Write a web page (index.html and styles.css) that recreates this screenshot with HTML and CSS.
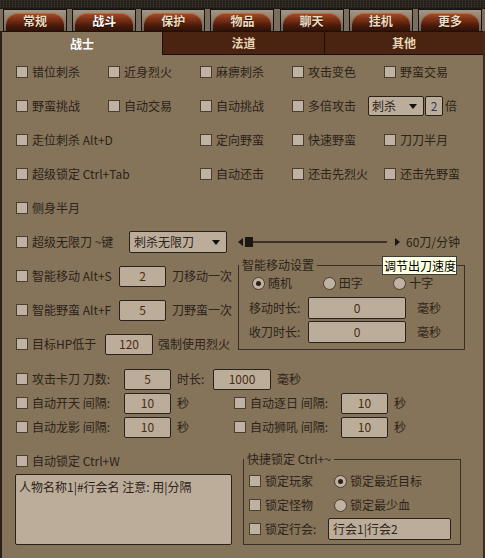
FILE: index.html
```html
<!DOCTYPE html>
<html lang="zh-CN">
<head>
<meta charset="utf-8">
<title>战斗设置</title>
<link rel="stylesheet" href="styles.css">
</head>
<body>
<div class="top-strip"></div>
<nav class="tabbar">
  <div class="tab"><div class="tab-in">常规</div></div>
  <div class="tab active"><div class="tab-in">战斗</div></div>
  <div class="tab"><div class="tab-in">保护</div></div>
  <div class="tab"><div class="tab-in">物品</div></div>
  <div class="tab"><div class="tab-in">聊天</div></div>
  <div class="tab"><div class="tab-in">挂机</div></div>
  <div class="tab"><div class="tab-in">更多</div></div>
</nav>
<main class="panel">
  <div class="subtabs">
    <div class="subtab st-1 active">战士</div>
    <div class="subtab st-2">法道</div>
    <div class="subtab st-3">其他</div>
  </div>
  <div class="content">
    <div class="grid5">
      <div class="item"><span class="cb"></span>错位刺杀</div>
      <div class="item"><span class="cb"></span>近身烈火</div>
      <div class="item"><span class="cb"></span>麻痹刺杀</div>
      <div class="item"><span class="cb"></span>攻击变色</div>
      <div class="item"><span class="cb"></span>野蛮交易</div>
    </div>
    <div class="grid5">
      <div class="item"><span class="cb"></span>野蛮挑战</div>
      <div class="item"><span class="cb"></span>自动交易</div>
      <div class="item"><span class="cb"></span>自动挑战</div>
      <div class="item span2"><span class="cb"></span><span class="w60">多倍攻击</span><span class="dd dd-sm"><span>刺杀</span><i class="tri"></i></span><span class="numbox">2</span><span class="ml2">倍</span></div>
    </div>
    <div class="grid5">
      <div class="item span2"><span class="cb"></span>走位刺杀 Alt+D</div>
      <div class="item"><span class="cb"></span>定向野蛮</div>
      <div class="item"><span class="cb"></span>快速野蛮</div>
      <div class="item"><span class="cb"></span>刀刀半月</div>
    </div>
    <div class="grid5">
      <div class="item span2"><span class="cb"></span>超级锁定 Ctrl+Tab</div>
      <div class="item"><span class="cb"></span>自动还击</div>
      <div class="item"><span class="cb"></span>还击先烈火</div>
      <div class="item"><span class="cb"></span>还击先野蛮</div>
    </div>
    <div class="grid5">
      <div class="item"><span class="cb"></span>侧身半月</div>
    </div>

    <div class="mid">
      <div class="row">
        <span class="cb"></span><span class="w97">超级无限刀 ~键</span>
        <span class="dd dd-lg"><span>刺杀无限刀</span><i class="tri"></i></span>
        <div class="slider">
          <i class="arr-l"></i><i class="thumb"></i><i class="track"></i><i class="arr-r"></i>
          <span class="speed">60刀/分钟</span>
        </div>
      </div>
      <div class="split">
        <div class="left-col">
          <div class="row"><span class="cb"></span><span class="w87">智能移动 Alt+S</span><span class="field w47">2</span><span class="ml6">刀移动一次</span></div>
          <div class="row"><span class="cb"></span><span class="w87">智能野蛮 Alt+F</span><span class="field w47">5</span><span class="ml6">刀野蛮一次</span></div>
          <div class="row"><span class="cb"></span><span class="w73">目标HP低于</span><span class="field w48">120</span><span class="ml5">强制使用烈火</span></div>
        </div>
        <fieldset class="grp grp1">
          <legend>智能移动设置</legend>
          <div class="radios">
            <div class="ritem"><span class="rb on"></span>随机</div>
            <div class="ritem"><span class="rb"></span>田字</div>
            <div class="ritem"><span class="rb"></span>十字</div>
          </div>
          <div class="trow trow-first"><span class="tl">移动时长:</span><span class="field w98">0</span><span class="ml11">毫秒</span></div>
          <div class="trow"><span class="tl">收刀时长:</span><span class="field w98">0</span><span class="ml11">毫秒</span></div>
        </fieldset>
      </div>
      <div class="tooltip">调节出刀速度</div>
    </div>

    <div class="timers">
      <div class="row row24"><span class="cb"></span><span class="w92">攻击卡刀 刀数:</span><span class="field w47">5</span><span class="ml6 w36">时长:</span><span class="field w58">1000</span><span class="ml6">毫秒</span></div>
      <div class="row row24"><span class="cb"></span><span class="w92">自动开天 间隔:</span><span class="field w47">10</span><span class="ml6 w57">秒</span><span class="cb"></span><span class="w91">自动逐日 间隔:</span><span class="field w47">10</span><span class="ml6">秒</span></div>
      <div class="row row24"><span class="cb"></span><span class="w92">自动龙影 间隔:</span><span class="field w47">10</span><span class="ml6 w57">秒</span><span class="cb"></span><span class="w91">自动狮吼 间隔:</span><span class="field w47">10</span><span class="ml6">秒</span></div>
    </div>

    <div class="bottom">
      <div class="bcol">
        <div class="row row24"><span class="cb"></span>自动锁定 Ctrl+W</div>
        <div class="ta">人物名称1|#行会名 注意: 用|分隔</div>
      </div>
      <fieldset class="grp grp2">
        <legend>快捷锁定 Ctrl+~</legend>
        <div class="g2in">
          <div class="lrow"><div class="c1"><span class="cb"></span>锁定玩家</div><span class="rb on"></span>锁定最近目标</div>
          <div class="lrow"><div class="c1"><span class="cb"></span>锁定怪物</div><span class="rb"></span>锁定最少血</div>
          <div class="lrow"><span class="cb"></span><span class="w63">锁定行会:</span><span class="field w123 left">行会1|行会2</span></div>
        </div>
      </fieldset>
    </div>
  </div>
</main>
</body>
</html>
```

FILE: styles.css
```css
* { box-sizing: border-box; }
html, body { margin: 0; padding: 0; }
body {
  width: 485px;
  height: 558px;
  overflow: hidden;
  background: #85735a;
  font-family: "Noto Sans CJK SC", "Microsoft YaHei", sans-serif;
  font-size: 12px;
  line-height: 16px;
  color: #2c2319;
}

/* top decorative strip */
.top-strip {
  height: 8px;
  background-color: #2e271f;
  background-image:
    repeating-linear-gradient(90deg, rgba(255,255,255,0.06) 0 1px, transparent 1px 3px),
    repeating-linear-gradient(0deg, rgba(0,0,0,0.3) 0 1px, transparent 1px 2px);
}

/* main tabs */
.tabbar {
  height: 23px;
  display: flex;
  justify-content: space-between;
  align-items: flex-end;
  padding: 0 3px;
  background: #7b6e5f;
  border-top: 1px solid #1e1913;
}
.tab {
  width: 64px;
  height: 22px;
  border: 1px solid #16110c;
  border-bottom: 0;
  background: linear-gradient(#a39786, #6d6254);
  padding: 3px 2px 0;
}
.tab-in {
  height: 100%;
  border-radius: 12px 12px 0 0;
  background: linear-gradient(#a4502a 0%, #7c3216 35%, #4a1b0b 70%, #2e1107 100%);
  box-shadow: inset 0 1px 0 rgba(220,140,90,0.45);
  display: flex;
  align-items: center;
  justify-content: center;
  padding-bottom: 3px;
  color: #eadcc1;
  font-weight: bold;
  text-shadow: 0 1px 0 #1f0c05;
}
.tab.active .tab-in { color: #ffffff; }

/* panel */
.panel {
  height: 527px;
  border-left: 2px solid #2a2119;
  border-right: 2px solid #3a2e22;
}
.subtabs {
  display: flex;
  height: 24px;
  border-top: 1px solid #1a120b;
}
.subtab {
  display: flex;
  align-items: center;
  justify-content: center;
  font-weight: bold;
  color: #e6d5b3;
  background: #4a2311;
  border-left: 1px solid #1a0f08;
  border-bottom: 1px solid #1a0f08;
}
.st-1 { width: 160px; }
.st-2 { width: 162px; }
.st-3 { flex: 1; }
.subtab.active {
  background: transparent;
  color: #ffffff;
  border: 0;
}

.content { padding-left: 14px; }

.grid5 {
  display: grid;
  grid-template-columns: repeat(5, 92px);
  height: 34px;
  align-items: center;
}
.item { display: flex; align-items: center; white-space: nowrap; }
.span2 { grid-column: span 2; }

.cb {
  width: 12px;
  height: 12px;
  border: 1px solid #4a3e31;
  background: #bfb2a2;
  margin-right: 4px;
  flex: none;
}
.rb {
  width: 13px;
  height: 13px;
  border-radius: 50%;
  border: 1px solid #4a3e31;
  background: #bfb2a2;
  margin-right: 3px;
  flex: none;
  display: flex;
  align-items: center;
  justify-content: center;
}
.rb.on::after {
  content: "";
  width: 5px;
  height: 5px;
  border-radius: 50%;
  background: #2a2119;
}

.row {
  display: flex;
  align-items: center;
  height: 34px;
  white-space: nowrap;
}
.row24 { height: 24px; }

.field {
  height: 21px;
  border: 1px solid #2a2118;
  border-radius: 2px;
  background: #bcad9a;
  display: flex;
  align-items: center;
  justify-content: center;
  color: #4a2c12;
  flex: none;
}
.field.left { justify-content: flex-start; padding-left: 4px; color: #2c2319; }

.w36 { width: 36px; }
.w47 { width: 47px; }
.w48 { width: 48px; }
.w57 { width: 57px; }
.w58 { width: 58px; }
.w60 { width: 60px; }
.w63 { width: 63px; }
.w73 { width: 73px; }
.w87 { width: 87px; }
.w91 { width: 91px; }
.w92 { width: 92px; }
.w97 { width: 97px; }
.w98 { width: 98px; height: 22px; }
.w123 { width: 123px; height: 22px; }
.ml2 { margin-left: 2px; }
.ml5 { margin-left: 5px; }
.ml6 { margin-left: 6px; }
.ml11 { margin-left: 11px; }

/* dropdowns */
.dd {
  border: 1px solid #2a2118;
  border-radius: 2px;
  background: #bcad9a;
  display: flex;
  align-items: center;
  justify-content: space-between;
  padding: 0 6px 0 3px;
  flex: none;
}
.dd-sm { width: 56px; height: 20px; }
.dd-lg { width: 98px; height: 22px; padding-left: 4px; }
.tri {
  width: 0;
  height: 0;
  border-left: 4px solid transparent;
  border-right: 4px solid transparent;
  border-top: 5px solid #15100b;
}
.numbox {
  width: 18px;
  height: 20px;
  margin-left: 1px;
  border: 1px solid #2a2118;
  border-radius: 2px;
  background: #bcad9a;
  display: flex;
  align-items: center;
  justify-content: center;
  color: #2a3a6a;
}

/* slider */
.slider { display: flex; align-items: center; margin-left: 11px; }
.arr-l {
  width: 0; height: 0;
  border-top: 4px solid transparent;
  border-bottom: 4px solid transparent;
  border-right: 5px solid #1d1711;
}
.thumb { width: 8px; height: 10px; background: #1d1711; margin-left: 2px; }
.track { width: 134px; height: 2px; background: #3b3024; }
.arr-r {
  width: 0; height: 0;
  margin-left: 8px;
  border-top: 4px solid transparent;
  border-bottom: 4px solid transparent;
  border-left: 5px solid #1d1711;
}
.speed { margin-left: 6px; }

.mid { position: relative; }
.split { display: flex; }
.left-col { width: 222px; }

/* group boxes */
.grp {
  border: 1px solid #3a2f25;
  margin: 0;
  padding: 0;
  min-width: 0;
}
.grp legend {
  padding: 0 3px;
  margin: 0;
  line-height: 16px;
}
.grp1 {
  width: 227px;
  margin-top: -2px;
  align-self: flex-start;
  padding-bottom: 5px;
}
.radios { display: flex; align-items: center; height: 20px; padding-left: 13px; }
.ritem { width: 77px; display: flex; align-items: center; }
.trow { display: flex; align-items: center; height: 24px; padding-left: 10px; }
.trow-first { margin-top: 3px; }
.tl { width: 59px; }

.tooltip {
  position: absolute;
  left: 366px;
  top: 31px;
  width: 75px;
  height: 19px;
  background: #ffffe1;
  border: 1px solid #3c3c3c;
  color: #000;
  padding-left: 1px;
  line-height: 17px;
  white-space: nowrap;
  z-index: 2;
}

.timers { margin-top: 6px; }

.bottom { display: flex; margin-top: 10px; }
.bcol { width: 216px; }
.ta {
  margin-left: -1px;
  margin-top: 1px;
  width: 217px;
  height: 71px;
  border: 1px solid #2a2118;
  border-radius: 2px;
  background: #bcad9a;
  padding: 4px 3px;
  white-space: nowrap;
}
.grp2 {
  width: 218px;
  margin-left: 11px;
  margin-top: 2px;
  align-self: flex-start;
}
.g2in { padding: 2px 0 3px 5px; }
.lrow { display: flex; align-items: center; height: 24px; white-space: nowrap; }
.c1 { width: 85px; display: flex; align-items: center; }
```
